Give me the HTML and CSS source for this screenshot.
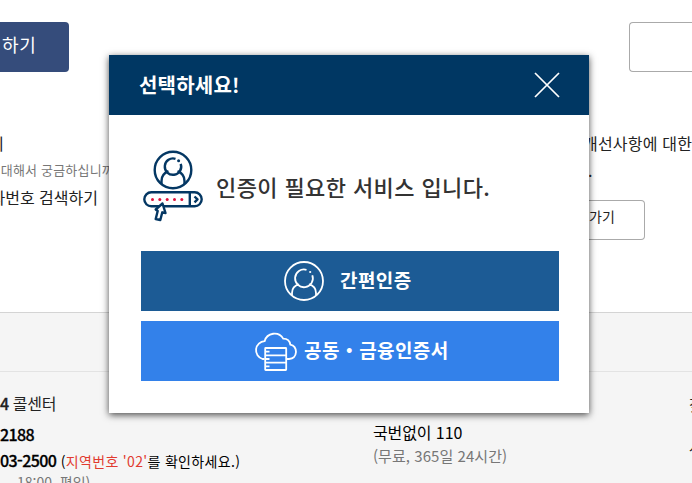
FILE: index.html
```
<!DOCTYPE html>
<html lang="ko">
<head>
<meta charset="utf-8">
<title>인증 서비스</title>
<link rel="stylesheet" href="styles.css">
</head>
<body>
<div class="page">
  <div class="actions">
    <div class="primary">하기</div>
    <div class="outline"></div>
  </div>
  <main class="guides">
    <section class="guide-left">
      <h2 class="guide-title">기</h2>
      <p class="guide-desc">대해서 궁금하십니까</p>
      <p class="guide-link">자번호 검색하기</p>
    </section>
    <section class="guide-right">
      <h2 class="guide-title">개선사항에 대한</h2>
      <p class="guide-dot">.</p>
      <div class="go">가기</div>
    </section>
  </main>
  <footer class="footer">
    <div class="footer-bar"></div>
    <div class="contacts">
      <section class="call">
        <h3 class="call-title"><b>4</b> <span>콜센터</span></h3>
        <p class="call-main"><b>2188</b></p>
        <p class="call-sub"><b>03-2500</b> <span>(<em>지역번호 '02'</em>를 확인하세요.)</span></p>
        <p class="call-time">18:00, 평일)</p>
      </section>
      <section class="free">
        <p class="free-main">국번없이 110</p>
        <p class="free-note">(무료, 365일 24시간)</p>
      </section>
      <section class="more">
        <p>찾</p>
        <p>사</p>
      </section>
    </div>
  </footer>
</div>
<div class="dialog">
  <header class="dialog-head">
    <h1>선택하세요!</h1>
    <svg class="close" viewBox="0 0 26 26"><path d="M1 1 25 25M25 1 1 25"/></svg>
  </header>
  <div class="dialog-body">
    <div class="notice">
      <svg class="notice-icon" viewBox="0 0 62 72">
        <g class="navy">
          <circle cx="31" cy="20" r="18.3"/>
          <path d="M33.5 8.8A8.2 8.2 0 1 0 38.7 13.8M19.5 34V31Q19.5 24 26.5 21.2M42.5 34V31Q42.5 24 35.5 21.2"/>
          <rect x="2.3" y="42.3" width="57.4" height="14" rx="7"/>
          <path d="M47.8 42.5V56M52.5 46.5 55.5 49.4 52.5 52.3"/>
          <path class="pointer" d="M20.5 53.5 13.7 59.5 15.7 61 13.7 69 18.3 70 20.3 62.3 23.5 63Z"/>
        </g>
        <circle class="navy-dot" cx="36.6" cy="10.8" r="1.5"/>
        <g class="red"><circle cx="10.5" cy="49.6" r="1.5"/><circle cx="17.8" cy="49.6" r="1.5"/><circle cx="25.2" cy="49.6" r="1.5"/><circle cx="32.5" cy="49.6" r="1.5"/><circle cx="39.8" cy="49.6" r="1.5"/></g>
      </svg>
      <p>인증이 필요한 서비스 입니다.</p>
    </div>
    <div class="choice simple">
      <svg class="user-icon" viewBox="0 0 40 40">
        <circle cx="20" cy="20" r="19"/>
        <path d="M22.5 8.8A8.9 8.9 0 1 0 28.3 14.2M8 34.5V32Q8 25 15.2 23.4M32 34.5V32Q32 25 24.8 23.4"/>
        <circle class="white-dot" cx="26.2" cy="11" r="1.1"/>
      </svg>
      <span>간편인증</span>
    </div>
    <div class="choice joint">
      <svg class="cloud-icon" viewBox="0 0 43 40">
        <path d="M10.5 28H8.5A9.1 9.1 0 0 1 10.6 10.2A10.2 10.2 0 0 1 29.2 7.6Q35.5 7.6 36.3 13.6Q42 15 42 21Q41.5 27.5 35 28H32.5"/>
        <rect x="11.2" y="17" width="21" height="22" rx=".5"/>
        <path d="M11 24.3H32.5M11 31.7H32.5M12 20.7H15.5M12 28H15.5M12 35.4H15.5"/>
      </svg>
      <span>공동・금융인증서</span>
    </div>
  </div>
</div>
</body>
</html>
```
FILE: styles.css
```
* { box-sizing: border-box; }
body, h1, h2, h3, p { margin: 0; font-weight: 400; }
body {
  position: relative;
  width: 692px;
  height: 483px;
  overflow: hidden;
  background: #fff;
  color: #222;
  font-family: "Noto Sans CJK KR", sans-serif;
  white-space: nowrap;
}
svg { display: block; fill: none; flex: none; }
.page { height: 483px; overflow: hidden; }
.actions { display: flex; justify-content: space-between; padding-top: 22px; }
.primary {
  width: 69px;
  height: 50px;
  padding-left: 2px;
  border-radius: 0 4px 4px 0;
  background: #354c7b;
  color: #fff;
  font-size: 18px;
  line-height: 44px;
  letter-spacing: .7px;
}
.outline {
  width: 63px;
  height: 50px;
  border: 1px solid #aaa;
  border-right: 0;
  border-radius: 4px 0 0 4px;
}
.guides { display: flex; justify-content: space-between; height: 240px; padding-top: 57px; }
.guide-left { display: flex; flex-direction: column; align-items: flex-end; width: 114px; overflow: hidden; }
.guide-title { font-size: 16px; line-height: 28px; }
.guide-left .guide-title { margin-right: 110px; }
.guide-right .guide-title { letter-spacing: .2px; }
.guide-desc { font-size: 13px; line-height: 26px; letter-spacing: .2px; color: #777; }
.guide-link { margin-right: 16px; font-size: 16px; line-height: 28px; }
.guide-right { width: 109px; }
.guide-dot { padding-left: 5px; font-size: 16px; line-height: 26px; }
.go {
  width: 62px;
  height: 40px;
  margin-top: 17px;
  padding-left: 6px;
  border: 1px solid #aaa;
  border-left: 0;
  border-radius: 0 4px 4px 0;
  font-size: 14px;
  line-height: 30px;
}
.footer { height: 171px; border-top: 1px solid #d4d4d4; background: #f5f5f5; }
.footer-bar { height: 59px; border-bottom: 1px solid #e3e3e3; }
.contacts { display: flex; }
.call { width: 240px; height: 111px; padding-top: 17px; }
.call b { font-weight: 500; -webkit-text-stroke: .3px; letter-spacing: -.6px; }
.call-title { font-size: 16px; line-height: 28px; letter-spacing: -.2px; }
.call-main { margin-top: 2px; font-size: 16px; line-height: 30px; color: #000; }
.call-sub { font-size: 16px; line-height: 22px; color: #000; }
.call-sub span { font-size: 14px; letter-spacing: .32px; }
.call-sub em { color: #e13b30; font-style: normal; }
.call-time { padding-left: 17px; font-size: 14px; line-height: 20px; color: #777; }
.free { width: 316px; padding: 48px 0 0 133px; }
.free-main { font-size: 16px; line-height: 24px; letter-spacing: -.1px; color: #000; }
.free-note { font-size: 15px; line-height: 24px; letter-spacing: .05px; color: #777; }
.more { width: 136px; padding: 18px 0 0 133px; font-size: 16px; line-height: 28px; overflow: hidden; }
.more p + p { margin-top: 14px; }

.dialog {
  position: absolute;
  top: 55px;
  left: 109px;
  width: 480px;
  height: 358px;
  background: #fff;
  box-shadow: 0 2px 7px rgba(0, 0, 0, .7);
}
.dialog-head {
  display: flex;
  align-items: center;
  justify-content: space-between;
  height: 60px;
  padding: 0 29px 0 30px;
  background: #003763;
  color: #fff;
}
.dialog-head h1 { padding-bottom: 2px; font-size: 20px; font-weight: 700; letter-spacing: .2px; }
.close { width: 26px; height: 26px; stroke: #fff; stroke-width: 1.7; }
.dialog-body { padding: 35px 30px 32px 32px; }
.notice { display: flex; height: 101px; }
.notice-icon { width: 62px; height: 72px; margin-left: 1px; }
.notice p { margin-left: 12px; padding-top: 19px; font-size: 22px; line-height: 34px; letter-spacing: .4px; font-weight: 500; color: #333; }
.navy { stroke: #043763; stroke-width: 2.4; stroke-linejoin: round; }
.pointer { fill: #fff; }
.navy-dot { fill: #043763; }
.red { fill: #e0123d; }
.choice {
  display: flex;
  align-items: center;
  width: 418px;
  height: 60px;
  color: #fff;
  font-size: 19px;
  font-weight: 700;
  letter-spacing: .4px;
}
.choice span { padding-bottom: 4px; }
.choice svg { stroke: #fff; stroke-width: 1.8; }
.simple { padding-left: 143px; background: #1c5b95; }
.joint { margin-top: 10px; padding-left: 113px; background: #3381ea; }
.user-icon { width: 40px; height: 40px; margin-right: 16px; }
.cloud-icon { width: 43px; height: 40px; margin-right: 7px; }
.white-dot { fill: #fff; stroke: none; }
```
